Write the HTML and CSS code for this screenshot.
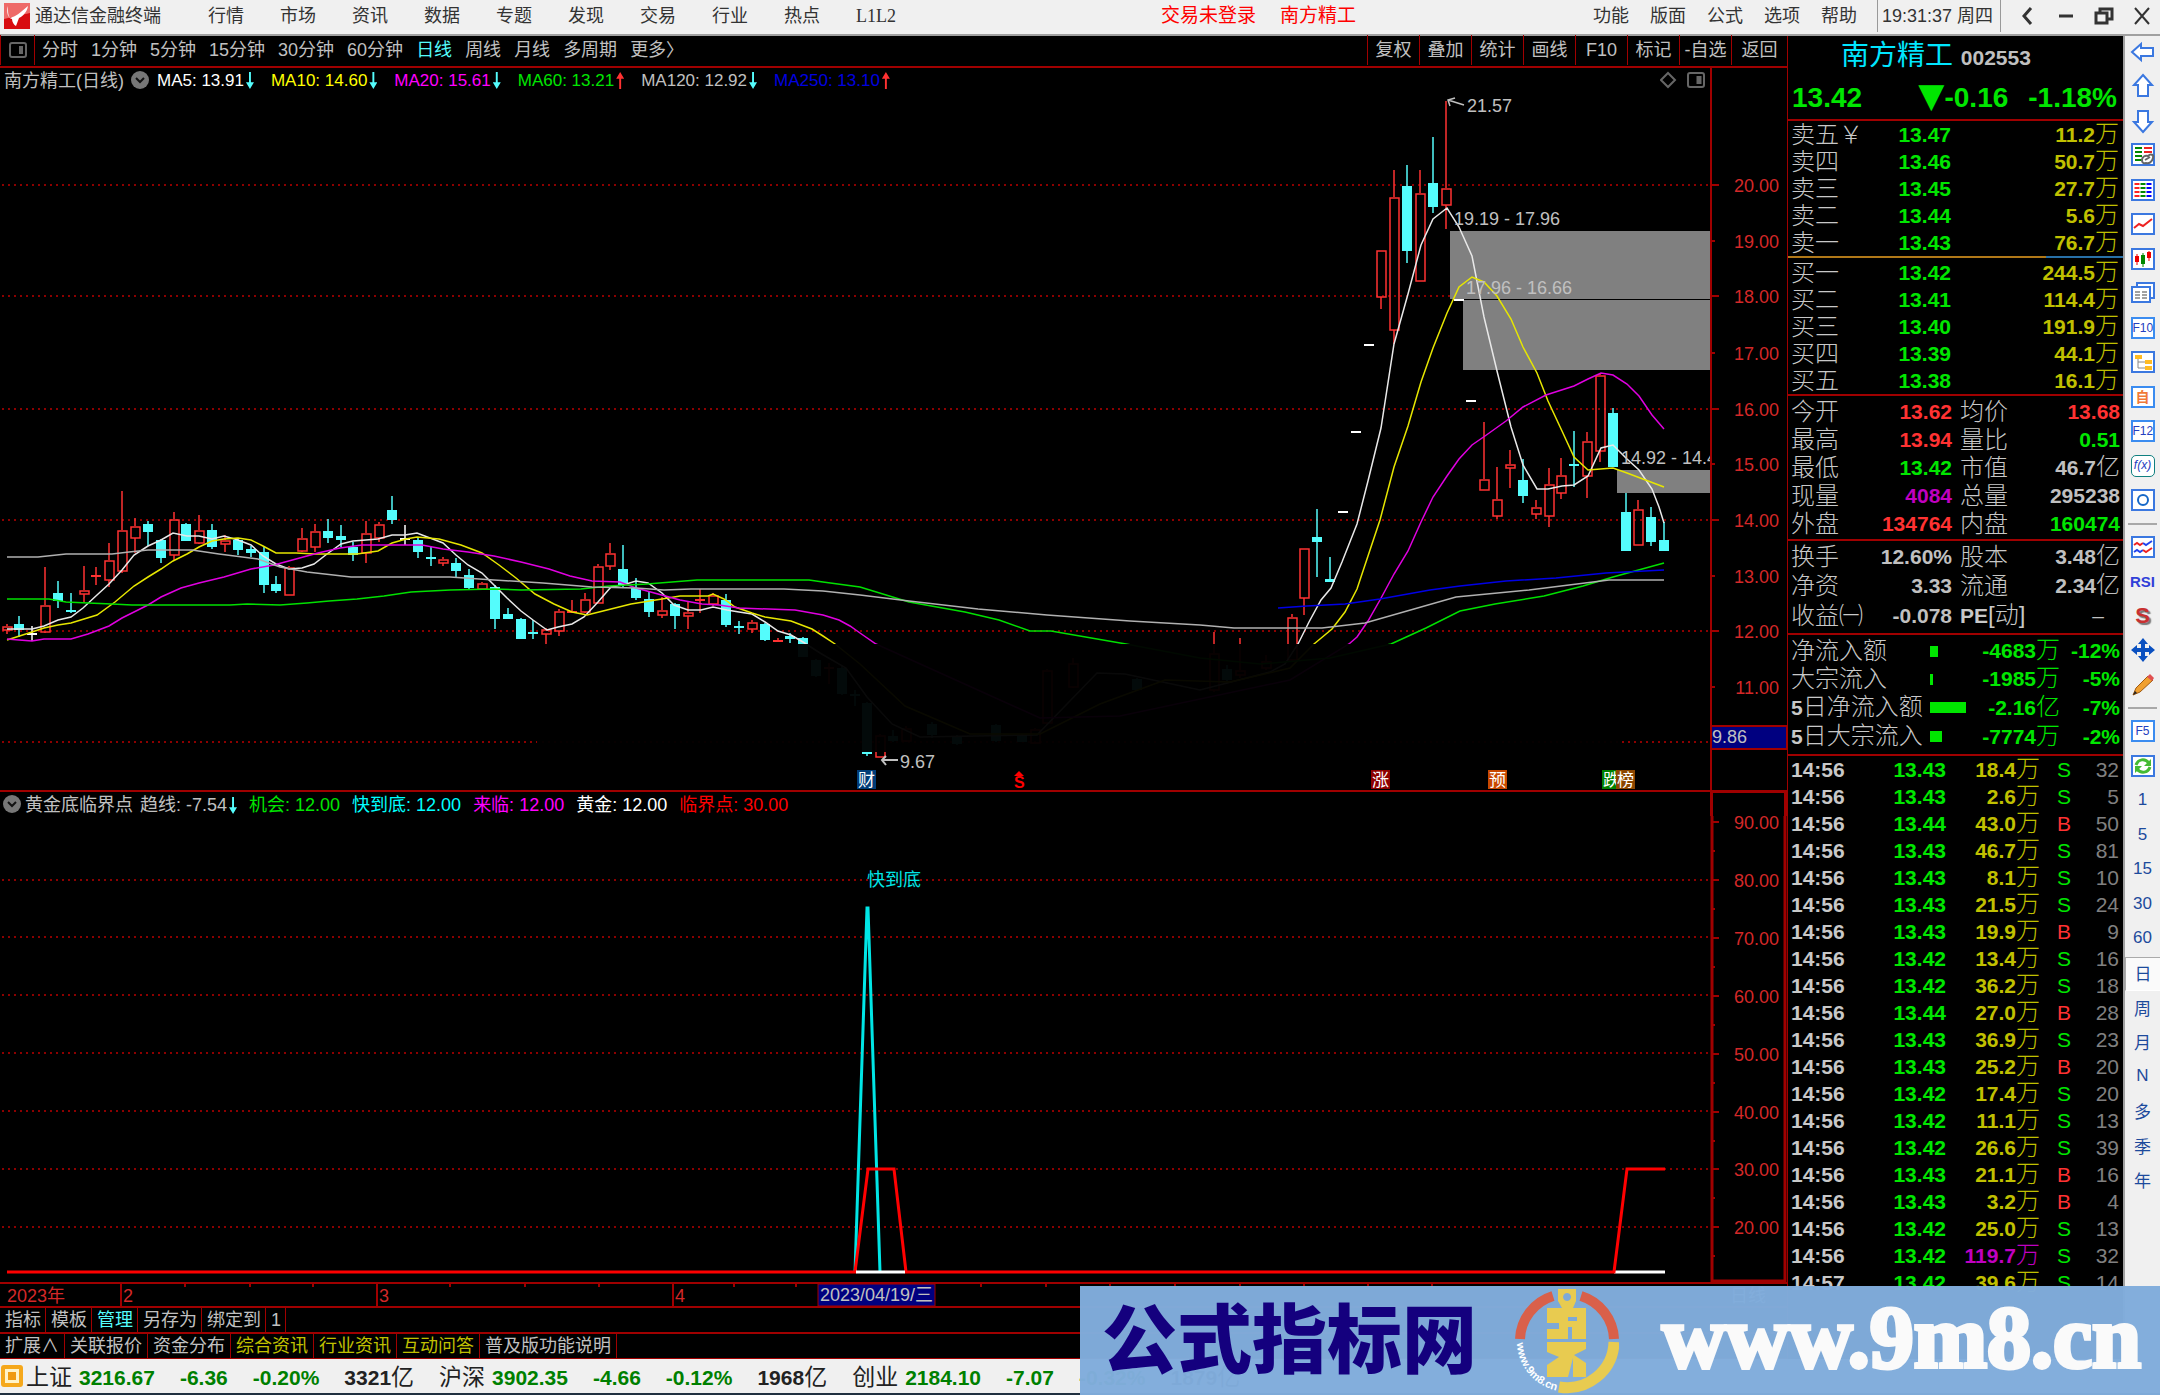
FILE: index.html
```html
<!DOCTYPE html>
<html lang="zh-CN">
<head>
<meta charset="utf-8">
<title>通达信金融终端</title>
<link rel="stylesheet" href="styles.css">
</head>
<body>

<header class="menubar">
  <svg class="logo" viewBox="0 0 26 26"><rect width="26" height="26" fill="#d80c10"/><path d="M0 0h26v10L0 16z" fill="#ee6a68"/><path d="M4 3c0 6 0 9 2 12l5-2c4-2 8-6 13-10-1 6-5 10-9 12l-3 8c-2-1-4-4-4-7-4-1-6-7-4-13z" fill="#fff"/></svg>
  <b class="app">通达信金融终端</b>
  <nav class="menu">
    <a href="#">行情</a><a href="#">市场</a><a href="#">资讯</a><a href="#">数据</a><a href="#">专题</a><a href="#">发现</a><a href="#">交易</a><a href="#">行业</a><a href="#">热点</a><a href="#" class="serif">L1L2</a>
  </nav>
  <div class="login"><span>交易未登录</span><span>南方精工</span></div>
  <nav class="menu tools">
    <a href="#">功能</a><a href="#">版面</a><a href="#">公式</a><a href="#">选项</a><a href="#">帮助</a>
  </nav>
  <div class="clock">19:31:37 周四</div>
  <div class="winbtns">
    <button aria-label="back"><svg viewBox="0 0 20 20"><path d="M13 2L6 10l7 8" stroke-width="3"/></svg></button>
    <button aria-label="minimize"><svg viewBox="0 0 20 20"><path d="M3 10h14" stroke-width="3"/></svg></button>
    <button aria-label="restore"><svg viewBox="0 0 20 20"><path d="M2 7h11v10H2zM6 6V3h12v10h-4" stroke-width="3"/></svg></button>
    <button aria-label="close"><svg viewBox="0 0 20 20"><path d="M3 2l14 16M17 2L3 18" stroke-width="2"/></svg></button>
  </div>
</header>

<div class="body">
<main class="left">
  <div class="periods">
    <button class="pane" aria-label="panel"><svg viewBox="0 0 18 18"><rect x="1" y="2" width="16" height="14" rx="2"/><path d="M12 5v8" stroke-width="4"/></svg></button>
    <a href="#">分时</a><a href="#">1分钟</a><a href="#">5分钟</a><a href="#">15分钟</a><a href="#">30分钟</a><a href="#">60分钟</a><a href="#" class="on">日线</a><a href="#">周线</a><a href="#">月线</a><a href="#">多周期</a><a href="#">更多〉</a>
    <div class="actions">
      <button>复权</button><button>叠加</button><button>统计</button><button>画线</button><button>F10</button><button>标记</button><button>-自选</button><button>返回</button>
    </div>
  </div>

  <div class="legend ma">
    <span class="name">南方精工(日线)</span>
    <svg class="drop" viewBox="0 0 18 18"><circle cx="9" cy="9" r="9" fill="#777"/><path d="M5 7l4 4 4-4" fill="none" stroke="#111" stroke-width="2"/></svg>
    <span class="white">MA5: 13.91<i class="dn"></i></span>
    <span class="yellow">MA10: 14.60<i class="dn"></i></span>
    <span class="magenta">MA20: 15.61<i class="dn"></i></span>
    <span class="green">MA60: 13.21<i class="up"></i></span>
    <span class="gray">MA120: 12.92<i class="dn"></i></span>
    <span class="blue">MA250: 13.10<i class="up"></i></span>
    <svg class="corner" viewBox="0 0 46 20"><path d="M1 10l7-7 7 7-7 7z"/><rect x="28" y="3" width="16" height="14" rx="2"/><path d="M39 6v8" stroke-width="5"/></svg>
    <div class="axiscap"></div>
  </div>
  <svg class="plot" id="price" viewBox="0 92 1787 699"></svg>

  <div class="legend sub">
    <svg class="drop" viewBox="0 0 18 18"><circle cx="9" cy="9" r="9" fill="#777"/><path d="M5 7l4 4 4-4" fill="none" stroke="#111" stroke-width="2"/></svg>
    <span class="gray name">黄金底临界点</span>
    <span class="gray">趋线: -7.54<i class="dn"></i></span>
    <span class="green">机会: 12.00</span>
    <span class="cyan">快到底: 12.00</span>
    <span class="magenta">来临: 12.00</span>
    <span class="white">黄金: 12.00</span>
    <span class="red">临界点: 30.00</span>
    <div class="axiscap box"></div>
  </div>
  <svg class="plot" id="indicator" viewBox="0 816 1787 466"></svg>
  <svg class="plot" id="timeaxis" viewBox="0 1282 1787 24"></svg>

  <div class="tabs"><button>指标</button><button>模板</button><button class="on">管理</button><button>另存为</button><button>绑定到</button><button>1</button></div>
  <div class="tabs ext"><button>扩展∧</button><button>关联报价</button><button>资金分布</button><button class="hot">综合资讯</button><button class="hot">行业资讯</button><button class="hot">互动问答</button><button>普及版功能说明</button></div>
</main>

<aside class="quote">
  <h1>南方精工 <b>002553</b></h1>
  <div class="last green"><span>13.42</span><span class="chg"><i>▼</i>-0.16</span><span>-1.18%</span></div>
  <table class="book sell">
    <tr><th>卖五￥</th><td>13.47</td><td class="vol">11.2<u>万</u></td></tr>
    <tr><th>卖四</th><td>13.46</td><td class="vol">50.7<u>万</u></td></tr>
    <tr><th>卖三</th><td>13.45</td><td class="vol">27.7<u>万</u></td></tr>
    <tr><th>卖二</th><td>13.44</td><td class="vol">5.6<u>万</u></td></tr>
    <tr><th>卖一</th><td>13.43</td><td class="vol">76.7<u>万</u></td></tr>
  </table>
  <div class="ratio"></div>
  <table class="book buy">
    <tr><th>买一</th><td>13.42</td><td class="vol">244.5<u>万</u></td></tr>
    <tr><th>买二</th><td>13.41</td><td class="vol">114.4<u>万</u></td></tr>
    <tr><th>买三</th><td>13.40</td><td class="vol">191.9<u>万</u></td></tr>
    <tr><th>买四</th><td>13.39</td><td class="vol">44.1<u>万</u></td></tr>
    <tr><th>买五</th><td>13.38</td><td class="vol">16.1<u>万</u></td></tr>
  </table>
  <table class="stats">
    <tr><th>今开</th><td class="lred">13.62</td><th>均价</th><td class="lred">13.68</td></tr>
    <tr><th>最高</th><td class="lred">13.94</td><th>量比</th><td class="green">0.51</td></tr>
    <tr><th>最低</th><td class="green">13.42</td><th>市值</th><td>46.7<u>亿</u></td></tr>
    <tr><th>现量</th><td class="purple">4084</td><th>总量</th><td>295238</td></tr>
    <tr><th>外盘</th><td class="lred">134764</td><th>内盘</th><td class="green">160474</td></tr>
  </table>
  <table class="stats three">
    <tr><th>换手</th><td>12.60%</td><th>股本</th><td>3.48<u>亿</u></td></tr>
    <tr><th>净资</th><td>3.33</td><th>流通</th><td>2.34<u>亿</u></td></tr>
    <tr><th>收益㈠</th><td>-0.078</td><th><b>PE</b>[动]</th><td class="none">–</td></tr>
  </table>
  <table class="flow green">
    <tr><th>净流入额</th><td class="bar"><i style="width:8px"></i></td><td>-4683<u>万</u></td><td>-12%</td></tr>
    <tr><th>大宗流入</th><td class="bar"><i style="width:3px"></i></td><td>-1985<u>万</u></td><td>-5%</td></tr>
    <tr><th><b>5</b>日净流入额</th><td class="bar"><i style="width:36px"></i></td><td>-2.16<u>亿</u></td><td>-7%</td></tr>
    <tr><th><b>5</b>日大宗流入</th><td class="bar"><i style="width:12px"></i></td><td>-7774<u>万</u></td><td>-2%</td></tr>
  </table>
  <table class="ticks" id="ticks"></table>
</aside>

<nav class="side">
  <button aria-label="left"><svg viewBox="0 0 26 26"><path class="o" d="M2 13l9-8v4h12v8H11v4z"/></svg></button>
  <button aria-label="up"><svg viewBox="0 0 26 26"><path class="o" d="M13 2l9 10h-4v11H8V12H4z"/></svg></button>
  <button aria-label="down"><svg viewBox="0 0 26 26"><path class="o" d="M13 24l9-10h-4V3H8v11H4z"/></svg></button>
  <button aria-label="report"><svg viewBox="0 0 26 26"><rect class="o" x="2" y="2" width="22" height="21"/><path d="M5 6h7M5 10h7M5 14h7M5 18h7" stroke="#080" stroke-width="2"/><path d="M14 6h8M14 10h8" stroke="#e22" stroke-width="2"/><path d="M12 18c0-3 3-5 6-4 3-3 6-1 5 2-1 4-4 6-7 5-3 1-4-1-4-3zm3 0l5-3" fill="none" stroke="#666" stroke-width="2"/></svg></button>
  <button aria-label="list"><svg viewBox="0 0 26 26"><rect class="o" x="2" y="3" width="22" height="20"/><g stroke-width="5" stroke-dasharray="2 2"><path d="M7 6v15" stroke="#f22"/><path d="M13 6v15" stroke="#080"/><path d="M19 6v15" stroke="#00f"/></g></svg></button>
  <button aria-label="trend"><svg viewBox="0 0 26 26"><rect class="o" x="2" y="3" width="22" height="20"/><path d="M4 17l5-4 4 2 9-7" fill="none" stroke="#e22" stroke-width="2"/></svg></button>
  <button aria-label="candles"><svg viewBox="0 0 26 26"><rect class="o" x="2" y="3" width="22" height="20"/><path d="M7 8v11M19 5v10" stroke="#e00"/><path d="M13 7v14" stroke="#080"/><path d="M7 10v6M19 6v6" stroke="#e00" stroke-width="4"/><path d="M13 9v9" stroke="#080" stroke-width="4"/></svg></button>
  <button aria-label="windows"><svg viewBox="0 0 26 26"><rect class="o" x="7" y="3" width="17" height="15"/><rect class="o" x="2" y="7" width="18" height="15"/><path d="M5 12h5M5 15h5M5 18h5M12 12h5M12 15h5M12 18h5" stroke="#444"/></svg></button>
  <button><span class="sq">F10</span></button>
  <button aria-label="tree"><svg viewBox="0 0 26 26"><rect class="o" x="2" y="3" width="22" height="20"/><path d="M8 9v10h7M8 13h7" fill="none" stroke="#888"/><path d="M5 6h7v4H5zM15 11h7v4h-7zM15 17h7v4h-7z" fill="#fb2"/></svg></button>
  <button><span class="sq orange">自</span></button>
  <button><span class="sq">F12</span></button>
  <button><span class="sq fx">f(x)</span></button>
  <button aria-label="circle"><svg viewBox="0 0 26 26"><rect class="o" x="2" y="3" width="22" height="20"/><circle cx="13" cy="13" r="5" fill="none" stroke="#1668c8" stroke-width="2"/></svg></button>
  <hr>
  <button aria-label="waves"><svg viewBox="0 0 26 26"><rect class="o" x="2" y="3" width="22" height="20"/><g fill="none" stroke-width="2"><path d="M4 11l3-2 3 2 3-2" stroke="#e22"/><path d="M13 9l3 2 3-2 3-2" stroke="#24e"/><path d="M4 18l3-2 3 2 3-2" stroke="#24e"/><path d="M13 16l3 2 3-2 3-2" stroke="#e22"/></g></svg></button>
  <button class="rsi">RSI</button>
  <button class="money">S</button>
  <button aria-label="move"><svg viewBox="0 0 26 26"><path d="M13 1l5 6H8zM13 25l5-6H8zM1 13l6-5v10zM25 13l-6-5v10z" fill="#0a50c0"/><path d="M13 6v14M6 13h14" stroke="#0a50c0" stroke-width="4"/></svg></button>
  <button aria-label="draw"><svg viewBox="0 0 26 26"><path d="M3 23l3-7L18 4l5 4L10 20z" fill="#f0a030" stroke="#a05a10"/><path d="M17 5l3-3 4 4-2 3z" fill="#e05050"/><path d="M3 23l2-4 2 2z" fill="#222"/></svg></button>
  <hr>
  <button><span class="sq">F5</span></button>
  <button aria-label="refresh"><svg viewBox="0 0 26 26"><rect class="o" x="2" y="3" width="22" height="20"/><path d="M6 12c2-6 9-7 13-2M20 14c-2 6-9 7-13 2" fill="none" stroke="#4b3" stroke-width="3"/><path d="M21 6v7h-7zM5 20v-7h7z" fill="#4b3"/></svg></button>
  <button>1</button>
  <button>5</button>
  <button>15</button>
  <button>30</button>
  <button>60</button>
  <button class="on">日</button>
  <button>周</button>
  <button>月</button>
  <button>N</button>
  <button>多</button>
  <button>季</button>
  <button>年</button>
</nav>
</div>

<footer class="status">
  <svg class="chip" viewBox="0 0 24 24"><rect x="1" y="1" width="22" height="22" rx="3" fill="#f5a81c"/><rect x="5" y="5" width="14" height="14" fill="#fff3c8"/><rect x="8" y="8" width="8" height="8" fill="#f09a10"/></svg>
  <span class="idx">上证</span><b>3216.67</b><b>-6.36</b><b>-0.20%</b><b class="amt">3321<u>亿</u></b>
  <span class="idx">沪深</span><b>3902.35</b><b>-4.66</b><b>-0.12%</b><b class="amt">1968<u>亿</u></b>
  <span class="idx">创业</span><b>2184.10</b><b>-7.07</b><b>-0.32%</b><b class="amt">1879<u>亿</u></b>
</footer>

<div class="banner">
  <strong>公式指标网</strong>
  <svg class="coin" viewBox="0 0 104 104">
    <path d="M5 50A47 47 0 0 1 38 7" fill="none" stroke="#d9604a" stroke-width="10"/>
    <path d="M66 7A47 47 0 0 1 99 50" fill="none" stroke="#d9604a" stroke-width="10"/>
    <path d="M99 53A47 47 0 0 1 44 98" fill="none" stroke="#e8cb50" stroke-width="11"/>
    <path fill="#e8cb50" fill-rule="evenodd" d="M43 0h18v12l-3 7h13v31H32V40h12v-6H32V19h15l-4-7zM52 4a4 4 0 1 0 .1 0zM53 28v4h9v-4zM53 38v12h4V38zM32 53h39v7l-12 6 12 8v14H58V69l-5 19H32V76l12-8-12-5z"/>
    <path id="arc" d="M2 54A50 50 0 0 0 44 102" fill="none"/>
    <text class="ring"><textPath href="#arc">www.9m8.cn</textPath></text>
  </svg>
  <em>www.9m8.cn</em>
</div>

<script src="chart.js"></script>
</body>
</html>
```

FILE: styles.css
```css
* { box-sizing: border-box; }
body {
  margin: 0;
  min-height: 100vh;
  background: #000;
  color: #c0c0c0;
  font-family: "Liberation Sans", "Noto Sans CJK SC", sans-serif;
  font-size: 18px;
  display: flex;
  flex-direction: column;
  position: relative;
  overflow: hidden;
}
a { color: inherit; text-decoration: none; }
u, i, em { text-decoration: none; font-style: normal; }
button {
  background: none;
  border: 0;
  padding: 0;
  margin: 0;
  color: inherit;
  font: inherit;
}
table { border-collapse: collapse; width: 100%; }

.white { color: #fff; }
.yellow { color: #ff0; }
.magenta { color: #f0f; }
.purple { color: #c000c0; }
.green { color: #00e600; }
.gray { color: #c0c0c0; }
.blue { color: #0000e0; }
.cyan { color: #0ff; }
.red { color: #f00; }
.lred { color: #ff3232; }

/* menu bar */
.menubar {
  height: 36px;
  background: #f0f0f0;
  border-bottom: 2px solid #a0a0a0;
  color: #333;
  display: flex;
  align-items: center;
  white-space: nowrap;
  line-height: 32px;
  padding-bottom: 2px;
}
.logo { width: 26px; height: 26px; margin: 0 5px 0 4px; }
.app { font-weight: 400; }
.menu { display: flex; align-items: baseline; gap: 36px; margin-left: 47px; }
.serif { font-family: "Liberation Serif", serif; }
.login {
  color: #f00;
  font-size: 19px;
  display: flex;
  gap: 24px;
  margin: 0 auto;
  padding-left: 28px;
}
.tools { gap: 21px; margin: 0 20px 0 0; }
.clock {
  border-left: 1px solid #999;
  border-right: 1px solid #999;
  padding: 0 4px;
  width: 124px;
}
.winbtns { display: flex; gap: 18px; padding: 0 8px 0 17px; }
.winbtns button { width: 20px; height: 20px; }
.winbtns svg { width: 20px; height: 20px; fill: none; stroke: #333; display: block; }

.body { flex: 1; display: flex; min-height: 0; }
.left { flex: 1; min-width: 0; }

.periods {
  height: 32px;
  border-bottom: 2px solid #a00000;
  display: flex;
  align-items: center;
  gap: 13px;
  white-space: nowrap;
  line-height: 28px;
  padding-bottom: 2px;
}
.pane {
  width: 35px;
  height: 30px;
  border: solid #a00000;
  border-width: 0 1px 0 1px;
  margin-right: -6px;
}
.pane svg { width: 18px; height: 18px; fill: none; stroke: #666; stroke-width: 2; display: block; margin: 0 auto; }
.periods .on, .tabs .on { color: #54fcfc; }
.actions { margin-left: auto; display: flex; }
.actions button { width: 52px; height: 30px; border-left: 1px solid #a00000; }
.actions button:last-child { width: 56px; }

.legend { height: 24px; display: flex; align-items: center; gap: 12px; white-space: nowrap; line-height: 22px; }
.legend > span { padding-top: 2px; }
.ma { font-size: 17px; gap: 17px; padding-left: 4px; }
.ma .name { font-size: 18px; margin-right: -10px; }
.ma .drop { margin-right: -9px; }
.sub { border-top: 2px solid #a00000; height: 26px; margin-top: -1px; padding-left: 3px; }
.sub .drop { margin-right: -8px; }
.sub .name { margin-right: -5px; }
.drop { width: 18px; height: 18px; }
.legend i { display: inline-block; width: 8px; height: 17px; vertical-align: -3px; margin-left: 2px; }
.dn { background: #54fcfc; clip-path: polygon(38% 0, 62% 0, 62% 60%, 100% 60%, 50% 100%, 0 60%, 38% 60%); }
.up { background: #ff3232; clip-path: polygon(38% 100%, 62% 100%, 62% 40%, 100% 40%, 50% 0, 0 40%, 38% 40%); }
.corner { width: 46px; height: 20px; margin-left: auto; margin-right: -13px; fill: none; stroke: #666; stroke-width: 2; }
.axiscap { width: 77px; align-self: stretch; border-left: 2px solid #a00000; }
.box { margin-left: auto; border: solid #a00000; border-width: 1px 3px 0 3px; }
.plot { display: block; width: 100%; height: auto; overflow: visible; }
.plot text { font-size: 18px; fill: #c0c0c0; }
.plot .ax { fill: #d42828; text-anchor: end; }
.plot .day { fill: #d42828; }
.plot .tag { fill: #fff; font-size: 17px; }
.plot .dollar { fill: #f00; font-size: 16px; font-weight: 700; }

.tabs { display: flex; height: 26px; border-top: 2px solid #a00000; }
.tabs button { padding: 0 4px 0 5px; border-right: 1px solid #a00000; line-height: 22px; white-space: nowrap; }
.tabs.ext { height: 27px; border-bottom: 1px solid #a00000; }
.ext button { padding: 0 5px; }
.tabs .hot { color: #c0c000; }

/* quote panel */
.quote { width: 336px; border-left: 1px solid #a00000; overflow: hidden; height: 1323px; }
.quote h1 {
  margin: 0;
  height: 42px;
  padding-left: 53px;
  font-size: 28px;
  font-weight: 400;
  line-height: 40px;
  color: #00e6ff;
  white-space: nowrap;
}
.quote h1 b { font-size: 21px; color: #c0c0c0; }
.last {
  height: 41px;
  padding: 0 6px 0 4px;
  font-size: 28px;
  font-weight: 700;
  line-height: 40px;
  display: flex;
}
.last .chg { margin: 0 20px 0 auto; }
.last i { font-family: "DejaVu Sans", sans-serif; font-size: 34px; line-height: 30px; }
.quote table { border-top: 2px solid #a00000; table-layout: fixed; border-collapse: separate; border-spacing: 0; }
.quote th, .quote td {
  padding: 0;
  height: 27px;
  line-height: 27px;
  font-size: 21px;
  font-weight: 700;
  text-align: right;
  white-space: nowrap;
}
.quote th, .quote u { font-size: 24px; font-weight: 300; text-align: left; }
.quote th { padding-left: 3px; color: #c8c8c8; }
.quote th b { font-size: 21px; font-weight: 700; }
.quote u { line-height: 20px; }
.quote .book td { color: #00e600; }
.book th { width: 100px; }
.book td:nth-child(2) { width: 63px; }
.quote .book .vol, .quote .ticks .vol { color: #c0c000; }
.quote .book .vol { padding-right: 4px; }
.ratio { height: 2px; background: linear-gradient(90deg, #b07818 77%, #2870a8 77%); }
.quote .buy { border-top: 0; padding-top: 1px; }
.quote .stats td, .quote .stats th { height: 28px; line-height: 28px; }
.stats { padding: 2px 3px 1px 0; }
.quote .three { padding: 1px 3px 3px 0; }
.quote .three td, .quote .three th { height: 29px; line-height: 29px; }
.stats th { width: 76px; }
.stats td { width: 88px; }
.stats th:nth-child(3) { padding-left: 8px; width: 80px; }
.quote .stats .none { padding-right: 16px; font-weight: 400; }
.flow { padding: 2px 0 3px; }
.quote .flow td, .quote .flow th { height: 28px; line-height: 28px; }
.flow th { width: 140px; }
.flow td { width: 62px; }
.quote .flow td:last-child { padding-right: 3px; }
.flow .bar { width: 38px; }
.flow td:nth-child(3) { width: 90px; }
.bar i { display: block; height: 11px; background: #00e600; }
.ticks th { width: 64px; }
.quote .ticks th { font-size: 21px; font-weight: 700; }
.quote .ticks td { color: #00e600; }
.ticks td:nth-child(2) { width: 94px; }
.ticks .vol { width: 94px; }
.quote .ticks .side-col { width: 31px; font-weight: 400; }
.quote .ticks .b { color: #ff3232; }
.quote .ticks .big { color: #c000c0; }
.quote .ticks .n { color: #808080; font-weight: 400; padding-right: 4px; }

/* right tool strip */
.side {
  width: 37px;
  background: #f0f0f0;
  border-left: 2px solid #a0a0a0;
  color: #1c4a9c;
  font-size: 17px;
  display: flex;
  flex-direction: column;
}
.side button { height: 34px; display: flex; align-items: center; justify-content: center; padding-bottom: 3px; }
.side button:nth-of-type(even) { height: 35px; }
.side hr { width: 29px; height: 2px; margin: 4px auto 6px; border: 0; background: #a8a8a8; }
.side svg { width: 26px; height: 26px; fill: none; }
.side .o { fill: #fff; stroke: #3b78e0; stroke-width: 2; }
.sq { width: 24px; height: 22px; border: 2px solid #3b8cf0; background: #fff; color: #2440c0; font-size: 12px; line-height: 18px; }
.orange { color: #f07838; font-size: 14px; font-weight: 700; }
.fx { border: 1px solid #108080; border-radius: 5px; font-style: italic; }
.side .rsi { color: #3040d8; font-size: 15px; font-weight: 700; }
.side .money { color: #c83030; font-size: 22px; font-weight: 700; text-shadow: 2px 2px 1px #777; }
.side .on { background: #fafafa; border: 1px solid #aaa; border-right: 0; border-bottom-color: #fff; }

.status {
  height: 36px;
  background: #f0f0f0;
  border-bottom: 2px solid #203040;
  display: flex;
  align-items: baseline;
  gap: 25px;
  white-space: nowrap;
  overflow: hidden;
  color: #222;
  font-size: 21px;
  line-height: 36px;
}
.chip { width: 24px; height: 24px; margin-right: -23px; flex: none; align-self: center; }
.status b { color: #008000; font-weight: 700; }
.status .idx { font-size: 23px; margin-right: -18px; }
.status .amt { color: #222; }
.status u { font-size: 23px; font-weight: 400; line-height: 20px; }

.banner {
  position: absolute;
  left: 50%;
  right: 0;
  bottom: 0;
  height: 109px;
  background: rgba(129, 172, 219, .98);
  display: flex;
  align-items: center;
  padding: 0 19px 0 22px;
  white-space: nowrap;
}
.banner strong { color: #14007e; font-size: 75px; font-weight: 900; line-height: 100px; }
.coin { width: 104px; height: 106px; margin-left: 38px; flex: none; }
.ring { font-size: 11px; font-weight: 700; fill: #fff; }
.banner em {
  margin-left: auto;
  font-family: "Liberation Serif", serif;
  font-size: 88px;
  font-weight: 700;
  line-height: 96px;
  padding-bottom: 6px;
  color: #fafafa;
  -webkit-text-stroke: 4px #fafafa;
}
```

FILE: chart.js
```js
// candle: index, high, body top, body bottom, low, kind (r hollow, c filled, f small red, x doji, w white doji)
var candles = [
[0,624,626,630,634,'r'],[1,616,624,630,637,'c'],[2,626,633,634,641,'w'],[3,567,605,632,633,'r'],[4,581,593,601,608,'c'],
[5,593,610,612,613,'c'],[6,566,590,594,603,'r'],[7,567,575,577,585,'f'],[8,543,560,580,587,'r'],[9,491,530,571,573,'r'],
[10,518,526,538,553,'r'],[11,521,524,532,546,'c'],[12,539,540,558,563,'c'],[13,512,519,555,560,'r'],[14,523,524,541,541,'c'],
[15,515,530,543,544,'r'],[16,524,530,547,549,'c'],[17,535,540,544,552,'r'],[18,539,540,550,555,'c'],[19,546,549,553,557,'c'],
[20,547,552,585,593,'c'],[21,576,584,591,593,'c'],[22,566,567,595,595,'r'],[23,528,538,551,552,'r'],[24,524,531,547,552,'r'],
[25,519,531,538,543,'c'],[26,525,536,540,547,'c'],[27,542,547,555,561,'c'],[28,521,533,553,563,'r'],[29,522,524,538,542,'r'],
[30,496,510,520,524,'c'],[31,525,538,539,545,'w'],[32,538,540,552,558,'c'],[33,547,557,558,566,'x'],[34,557,559,563,566,'r'],
[35,558,563,571,578,'c'],[36,569,575,588,590,'c'],[37,582,583,589,590,'r'],[38,585,587,619,629,'c'],[39,608,614,619,619,'c'],
[40,618,619,639,639,'c'],[41,620,632,634,639,'c'],[42,628,629,634,648,'r'],[43,609,611,631,636,'r'],[44,600,611,613,613,'f'],
[45,593,599,612,613,'r'],[46,564,566,603,603,'r'],[47,543,553,566,570,'r'],[48,545,569,585,587,'c'],[49,578,588,598,600,'c'],
[50,591,599,612,617,'c'],[51,597,610,615,618,'r'],[52,603,604,616,629,'c'],[53,601,612,616,629,'r'],[54,589,599,600,613,'f'],
[55,593,595,604,606,'r'],[56,594,600,625,627,'c'],[57,621,626,627,634,'x'],[58,620,622,629,633,'r'],[59,623,624,640,641,'c'],
[60,638,640,642,642,'f'],[61,633,636,639,643,'c'],[62,637,638,657,657,'c'],[63,659,660,676,677,'c'],[64,663,667,669,684,'f'],
[65,666,668,694,695,'c'],[66,690,694,695,706,'x'],[67,702,703,754,756,'c'],[68,734,735,757,757,'r'],[69,730,736,741,742,'c'],
[70,726,728,741,742,'r'],[72,722,724,735,738,'c'],[74,735,736,744,745,'c'],[77,724,725,741,742,'c'],[79,734,735,742,742,'c'],
[80,728,729,743,743,'r'],[81,669,670,723,725,'r'],[83,658,663,687,688,'r'],[88,678,679,690,690,'c'],
[94,632,653,690,692,'r'],[95,665,669,680,681,'c'],[96,638,670,675,678,'r'],[98,655,661,668,670,'r'],
[100,614,617,660,661,'r'],[101,548,548,598,615,'r'],[102,509,537,542,577,'c'],[103,557,579,582,582,'c'],
[104,511,511,511,511,'w'],[105,431,431,431,431,'w'],[106,344,344,344,344,'w'],[107,250,250,297,309,'r'],[108,170,197,330,344,'r'],
[109,165,186,251,263,'c'],[110,170,193,281,281,'r'],[111,137,183,207,213,'c'],[112,101,188,205,229,'r'],[113,299,299,299,299,'w'],
[114,400,400,400,400,'w'],[115,422,479,490,490,'r'],[116,467,499,516,519,'r'],[117,450,464,468,488,'r'],[118,459,480,496,503,'c'],
[119,500,507,514,519,'r'],[120,468,484,516,527,'r'],[121,458,475,493,499,'r'],[122,431,464,465,487,'x'],[123,432,441,476,498,'r'],
[124,373,375,451,462,'r'],[125,408,413,467,467,'c'],[126,493,512,551,551,'c'],[127,500,509,545,545,'r'],[128,507,517,542,546,'c'],
[129,522,540,551,551,'c']
];

var lines = [
['#e8e8e8', '7,629 32,629 44,626 58,620 71,617 83,608 97,595 109,584 122,570 134,555 148,546 161,540 173,533 187,536 199,536 212,539 224,536 238,540 251,545 263,556 276,564 289,569 302,568 314,564 327,554 341,544 353,541 378,539 392,535 405,535 417,533 443,543 456,555 468,565 482,573 494,585 507,598 521,611 533,620 547,630 558,627 572,624 584,617 598,602 611,587 623,585 636,581 648,583 662,593 674,605 688,610 701,610 713,607 727,610 739,612 752,614 765,622 778,631 791,635 803,642 820,653 846,668 867,697 892,724 920,737 1037,735 1097,673 1125,674 1200,690 1270,672 1285,664 1298,644 1309,622 1321,600 1331,588 1342,562 1357,524 1368,481 1381,428 1394,344 1408,294 1421,245 1433,219 1447,208 1459,227 1472,256 1484,317 1497,371 1511,427 1523,465 1537,489 1548,489 1562,486 1574,485 1588,476 1601,448 1613,445 1627,459 1639,470 1652,489 1659,507 1664,523'],
['#e6e600', '7,640 32,632 44,628 58,625 71,623 97,615 115,602 134,586 148,577 161,569 173,561 187,554 199,547 212,541 224,539 238,538 251,540 263,546 276,553 296,553 315,554 357,554 378,551 392,543 406,539 417,537 439,539 461,545 482,553 499,565 516,578 535,594 554,604 572,612 587,615 603,611 631,604 662,599 680,596 708,596 713,594 724,599 735,607 752,613 765,617 791,621 812,629 823,636 835,644 860,664 905,706 970,734 1040,734 1100,704 1165,680 1230,682 1290,668 1314,644 1332,629 1345,612 1357,589 1368,556 1380,520 1394,467 1408,426 1421,382 1433,348 1447,313 1459,287 1472,277 1484,282 1497,296 1511,319 1523,347 1537,373 1548,401 1562,431 1574,457 1588,470 1613,468 1627,473 1664,487'],
['#e000e0', '7,639 19,640 32,641 44,639 71,639 88,634 109,626 122,618 134,612 148,605 161,597 181,588 199,583 224,577 251,569 274,565 296,559 318,553 340,548 362,545 422,545 443,549 468,552 494,556 521,562 549,569 570,576 592,581 620,582 636,588 658,594 680,600 702,604 719,605 739,608 795,610 823,615 839,620 850,626 860,633 876,644 1040,718 1120,716 1290,680 1349,644 1357,637 1368,621 1380,600 1394,574 1408,551 1421,522 1433,497 1447,476 1459,459 1472,445 1485,436 1506,421 1523,407 1546,395 1574,386 1588,379 1601,373 1613,375 1627,384 1639,396 1652,415 1664,429'],
['#00e000', '7,599 49,599 66,602 88,603 112,604 132,605 230,605 247,604 280,605 307,603 329,601 357,599 384,596 411,592 450,590 494,589 521,590 581,589 609,586 647,584 697,580 809,580 823,582 860,587 909,602 965,612 999,620 1030,631 1051,631 1126,644 1200,658 1260,664 1330,658 1391,644 1426,628 1460,611 1495,604 1544,596 1583,586 1613,577 1664,563'],
['#b0b0b0', '7,557 38,557 66,554 112,554 129,552 148,550 192,550 219,554 258,559 280,567 307,572 351,577 450,577 494,580 543,583 592,587 636,588 664,590 691,589 784,589 823,591 860,595 909,601 978,609 1047,615 1130,621 1200,625 1234,628 1322,628 1365,623 1456,597 1529,590 1609,580 1664,580'],
['#0000e6', '1278,608 1307,606 1345,604 1380,599 1430,590 1460,586 1506,581 1556,578 1606,573 1664,570']
];

var RED = '#a00000', UP = '#ff3232', DOWN = '#54fcfc';

function line(x1, y1, x2, y2, color, w, extra) {
  return '<line x1="' + x1 + '" y1="' + y1 + '" x2="' + x2 + '" y2="' + y2 + '" stroke="' + color + '" stroke-width="' + (w || 1) + '" ' + (extra || '') + '/>';
}
function rect(x, y, w, h, fill, extra) {
  return '<rect x="' + x + '" y="' + y + '" width="' + w + '" height="' + h + '" fill="' + fill + '" ' + (extra || '') + '/>';
}
function text(x, y, s, extra) {
  return '<text x="' + x + '" y="' + y + '" ' + (extra || '') + '>' + s + '</text>';
}
function poly(points, color, w) {
  return '<polyline points="' + points + '" fill="none" stroke="' + color + '" stroke-width="' + w + '"/>';
}
function grid(y) {
  return line(2, y, 1711, y, '#8c0000', 2, 'stroke-dasharray="2 4"');
}

function drawPrice() {
  var s = '';
  [185, 296, 409, 520, 631, 742].forEach(function (y) { s += grid(y); });

  // gap zones
  s += rect(1450, 231, 261, 68, '#808080') + rect(1463, 300, 248, 70, '#808080') + rect(1617, 470, 94, 23, '#808080');

  candles.forEach(function (c) {
    var x = Math.round(6.5 + c[0] * 12.85), k = c[5];
    var col = k == 'w' ? '#fff' : (k == 'r' || k == 'f') ? UP : DOWN;
    if (k == 'r') {
      s += line(x, c[1], x, c[2], col, 1.5) + line(x, c[3], x, c[4], col, 1.5);
      s += rect(x - 4, c[2] + 1, 9, Math.max(c[3] - c[2] - 1, 2), 'none', 'stroke="' + col + '" stroke-width="1.5"');
    } else {
      if (c[4] > c[1]) s += line(x, c[1], x, c[4], col, 1.5);
      s += rect(x - 5, c[2], 10, Math.max(c[3] - c[2], 2), col);
    }
  });
  lines.forEach(function (l) { s += poly(l[1], l[0], 1.5); });

  s += rect(537, 644, 1084, 108, '#000', 'opacity=".96"');

  s += text(1467, 112, '21.57') + '<path d="M1464 105L1448 100M1455 98L1448 100L1450 106" fill="none" stroke="#c0c0c0" stroke-width="1.5"/>';
  s += text(1454, 225, '19.19 - 17.96') + text(1466, 294, '17.96 - 16.66');
  s += '<svg x="1600" y="440" width="110" height="40">' + text(21, 24, '14.92 - 14.48') + '</svg>';
  s += text(900, 768, '9.67') + '<path d="M898 760H882M886 765L882 760L886 756" fill="none" stroke="#c0c0c0" stroke-width="2"/>';

  // event tags
  [[857, '财', '#003c78'], [1371, '涨', '#8c0000'], [1488, '预', '#c84800'], [1602, '跌', '#008000'], [1616, '榜', '#8c4600']].forEach(function (t) {
    s += rect(t[0], 770, 19, 19, t[2]) + text(t[0] + 1, 786, t[1], 'class="tag"');
  });
  s += text(1014, 788, 'S', 'class="dollar"') + '<path d="M1014 776l5-5 5 5z" fill="#f00"/>';

  s += line(1711, 92, 1711, 791, RED, 2);
  var p = 20;
  [185, 241, 296, 353, 409, 464, 520, 576, 631, 687].forEach(function (y) {
    s += line(1711, y, p % 2 ? 1715 : 1719, y, RED, 2);
    s += text(1779, y + 7, p + '.00', 'class="ax"');
    p--;
  });
  s += rect(1711, 726, 76, 23, '#000080', 'stroke="' + RED + '" stroke-width="2"') + text(1712, 743, '9.86');
  document.getElementById('price').innerHTML = s;
}

function drawIndicator() {
  var s = '';
  [880, 937, 995, 1053, 1111, 1169, 1227].forEach(function (y) { s += grid(y); });
  s += poly('1614,1272 1665,1272', '#fff', 3);
  s += poly('855,1272 867,908 868,908 880,1272', '#00e6e6', 3);
  s += poly('7,1272 855,1272 868,1169 894,1169 906,1272 1614,1272 1627,1169 1665,1169', '#f00', 3);
  s += line(856, 1272, 905, 1272, '#fff', 3);
  s += text(867, 886, '快到底', 'style="fill:#00e6e6"');
  s += '<path d="M1712 816V1281H1785V816" fill="none" stroke="' + RED + '" stroke-width="3"/>';
  for (var i = 0; i < 8; i++) {
    var y = Math.round(822 + i * 57.9);
    s += line(1711, y, 1719, y, RED, 2) + line(1711, y + 29, 1715, y + 29, RED, 2);
    s += text(1779, y + 7, (90 - i * 10) + '.00', 'class="ax"');
  }
  document.getElementById('indicator').innerHTML = s;
}

function drawTimeAxis() {
  var s = line(0, 1283, 1787, 1283, RED, 2);
  [185, 250, 313, 450, 525, 599, 734, 796, 981, 1046, 1110, 1175, 1240, 1304, 1368, 1432].forEach(function (x) {
    s += line(x, 1283, x, 1287, RED, 2);
  });
  s += text(7, 1302, '2023年', 'class="day"');
  [[121, 2], [377, 3], [673, 4]].forEach(function (m) {
    s += line(m[0], 1283, m[0], 1306, RED, 2) + text(m[0] + 2, 1302, m[1], 'class="day"');
  });
  s += rect(818, 1284, 117, 22, '#000080', 'stroke="' + RED + '"') + text(820, 1301, '2023/04/19/三');
  s += text(1730, 1302, '日线');
  document.getElementById('timeaxis').innerHTML = s;
}

var ticks = [
['14:56','13.43','18.4','S',32],['14:56','13.43','2.6','S',5],['14:56','13.44','43.0','B',50],['14:56','13.43','46.7','S',81],
['14:56','13.43','8.1','S',10],['14:56','13.43','21.5','S',24],['14:56','13.43','19.9','B',9],['14:56','13.42','13.4','S',16],
['14:56','13.42','36.2','S',18],['14:56','13.44','27.0','B',28],['14:56','13.43','36.9','S',23],['14:56','13.43','25.2','B',20],
['14:56','13.42','17.4','S',20],['14:56','13.42','11.1','S',13],['14:56','13.42','26.6','S',39],['14:56','13.43','21.1','B',16],
['14:56','13.43','3.2','B',4],['14:56','13.42','25.0','S',13],['14:56','13.42','119.7','S',32],['14:57','13.42','39.6','S',14]
];

function drawTicks() {
  document.getElementById('ticks').innerHTML = ticks.map(function (t) {
    return '<tr><th>' + t[0] + '</th><td>' + t[1] + '</td><td class="vol' + (t[2] > 100 ? ' big' : '') + '">' + t[2] + '<u>万</u></td>' +
      '<td class="side-col' + (t[3] == 'B' ? ' b' : '') + '">' + t[3] + '</td><td class="n">' + t[4] + '</td></tr>';
  }).join('');
}

drawPrice();
drawIndicator();
drawTimeAxis();
drawTicks();
```
